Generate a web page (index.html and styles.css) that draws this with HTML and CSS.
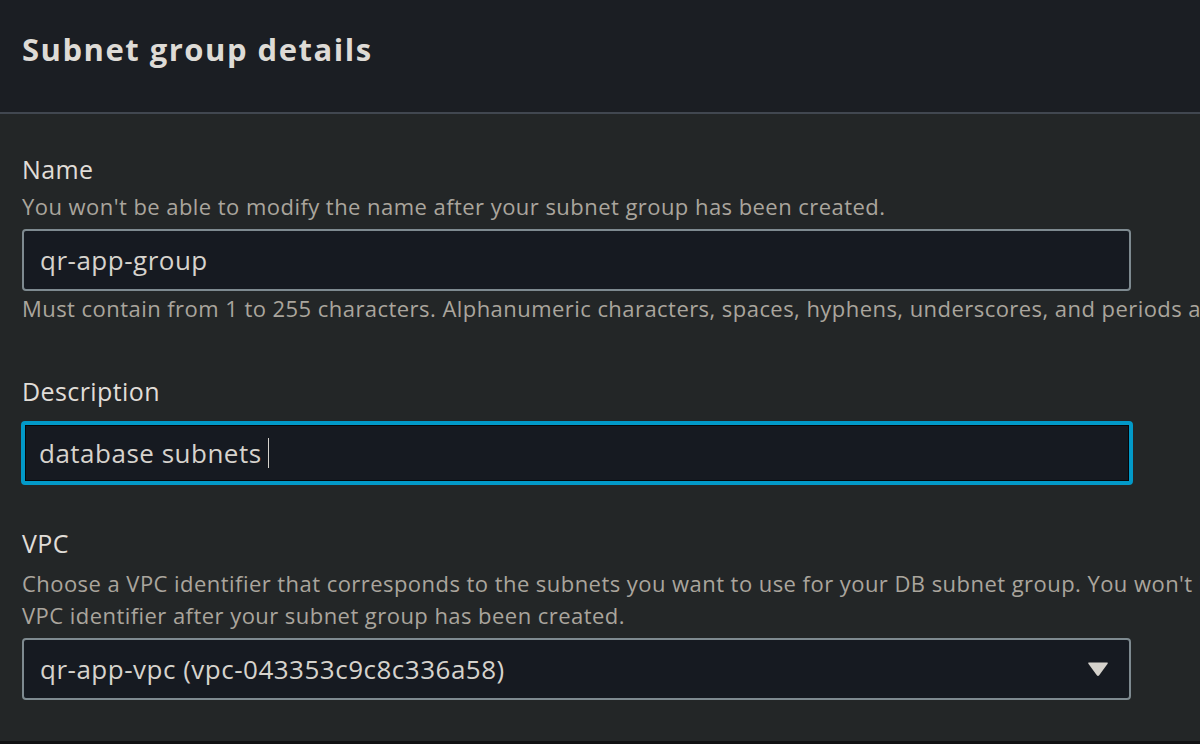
FILE: index.html
```html
<!DOCTYPE html>
<html lang="en">

<head>
    <meta charset="UTF-8">
    <meta name="viewport" content="width=device-width, initial-scale=1.0">
    <title>Subnet group details</title>
    <link rel="stylesheet" href="styles.css">
</head>

<body>
    <div class="panel">
        <div class="panel-header">
            <h2>Subnet group details</h2>
        </div>

        <div class="panel-body">
            <div class="form-field field-name">
                <label for="name">Name</label>
                <div class="field-desc">You won't be able to modify the name after your subnet group has been created.</div>
                <input type="text" id="name" class="text-input" value="qr-app-group">
                <div class="field-hint">Must contain from 1 to 255 characters. Alphanumeric characters, spaces, hyphens, underscores, and periods are allowed.</div>
            </div>

            <div class="form-field field-description">
                <label for="description" class="label-only">Description</label>
                <div class="text-input focused" id="description">
                    <span>database subnets</span><span class="caret"></span>
                </div>
            </div>

            <div class="form-field field-vpc">
                <label for="vpc">VPC</label>
                <div class="field-desc">Choose a VPC identifier that corresponds to the subnets you want to use for your DB subnet group. You won't be able to modify the<br>VPC identifier after your subnet group has been created.</div>
                <div class="text-input select" id="vpc">
                    <span>qr-app-vpc (vpc-043353c9c8c336a58)</span>
                    <svg class="select-arrow" width="22" height="16" viewBox="0 0 22 16">
                        <path d="M2 1.5 H20 Q21.5 1.5 20.6 2.8 L12.2 14.2 Q11 15.6 9.8 14.2 L1.4 2.8 Q0.5 1.5 2 1.5 Z" fill="#d5d2cc" />
                    </svg>
                </div>
            </div>
        </div>
    </div>
    <div class="page-bottom"></div>
</body>

</html>
```

FILE: styles.css
```css
body {
    margin: 0;
    background-color: #232627;
    font-family: "Open Sans", "Noto Sans", Arial, sans-serif;
    color: #e0ddd8;
    overflow: hidden;
    height: 744px;
    display: flex;
    flex-direction: column;
}

.panel {
    height: 741px;
    overflow: hidden;
}

.panel-header {
    background-color: #1b1e23;
    height: 114px;
    border-bottom: 2px solid #414750;
    padding: 0 22px;
    box-sizing: border-box;
    display: flex;
    align-items: flex-start;
}

.panel-header h2 {
    margin: 27px 0 0;
    font-size: 31px;
    line-height: 44px;
    font-weight: 700;
    color: #dedbd6;
    letter-spacing: 1.5px;
    white-space: nowrap;
}

.panel-body {
    padding: 37px 22px 0;
}

.form-field {
    margin-bottom: 42px;
}

.field-name {
    margin-bottom: 49px;
}

.field-description {
    margin-bottom: 40px;
}

.form-field label {
    display: block;
    font-size: 25px;
    line-height: 36px;
    letter-spacing: 0.4px;
    color: #e0ddd8;
}

.label-only {
    margin-bottom: 12px;
}

.field-desc {
    font-size: 22px;
    line-height: 32px;
    letter-spacing: 0.45px;
    color: #aaa59d;
    white-space: nowrap;
    margin-top: 3px;
    margin-bottom: 7px;
}

.field-vpc .field-desc {
    margin-top: 6px;
    margin-bottom: 7px;
}

.field-hint {
    font-size: 22px;
    line-height: 32px;
    letter-spacing: 0.45px;
    color: #aaa59d;
    white-space: nowrap;
    margin-top: 1px;
}

.text-input {
    display: flex;
    align-items: center;
    width: 1109px;
    height: 62px;
    box-sizing: border-box;
    padding: 0 16px;
    background-color: #161a21;
    border: 2px solid #7e8a90;
    border-radius: 4px;
    font-family: inherit;
    font-size: 26px;
    letter-spacing: 0.5px;
    color: #d6d3cd;
    outline: none;
}

.text-input.focused {
    border: 4px solid #0299c8;
    box-shadow: inset 0 0 0 1px #05070a;
    padding: 0 14px;
    height: 64px;
    margin-left: -1px;
    width: 1112px;
}

.caret {
    display: inline-block;
    width: 1px;
    height: 30px;
    background-color: #d6d3cd;
    margin-left: 6px;
}

.select {
    justify-content: space-between;
}

.select-arrow {
    margin-right: 4px;
}

.page-bottom {
    flex: 1;
    background-color: #101113;
}
```
